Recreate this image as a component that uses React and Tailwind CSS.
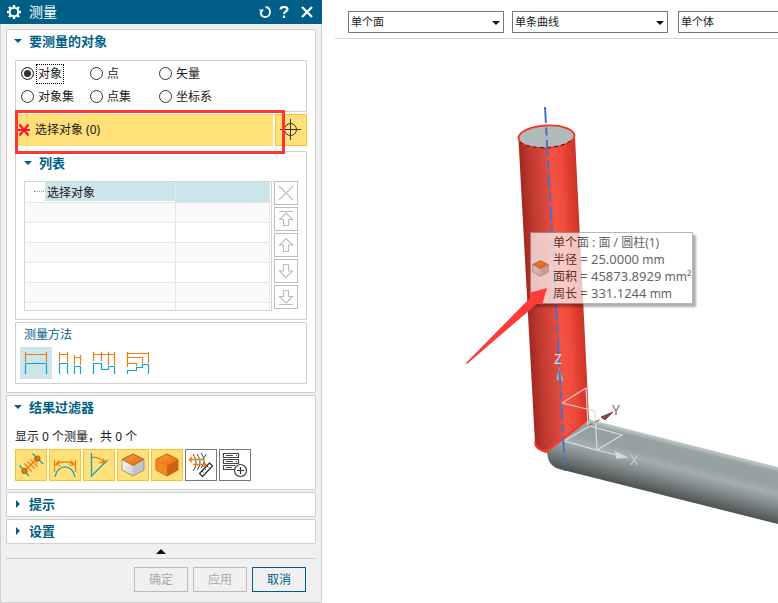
import React from "react";

const FONT = "font-['Noto_Sans','Noto_Sans_CJK_SC',sans-serif]";

function Caret({ open, className = "" }) {
  return (
    <svg className={`size-2 shrink-0 ${className}`} viewBox="0 0 8 8" fill="#005f87" aria-hidden="true">
      {open ? <path d="M0 2h8L4 6z" /> : <path d="M2 0v8l4-4z" />}
    </svg>
  );
}

function Heading({ open = true, children }) {
  return (
    <h2 className="text-[13px] leading-[22px] font-bold text-[#005f87]">
      <button type="button" aria-expanded={open} className="flex w-full items-center gap-[7px] pl-[7px] text-left">
        <Caret open={open} />
        {children}
      </button>
    </h2>
  );
}

function Section({ className = "", children }) {
  return <section className={`rounded-[1px] border border-[#cfcfcf] bg-white ${className}`}>{children}</section>;
}

function RadioOption({ label, checked }) {
  return (
    <label className="flex h-[23px] items-center gap-[2px] text-[12px] leading-4 text-[#1a1a1a]">
      <input
        type="radio"
        name="object-kind"
        defaultChecked={checked}
        className="m-0 size-[13px] appearance-none rounded-full border border-[#333] bg-white checked:bg-[#333] checked:shadow-[inset_0_0_0_2px_white]"
      />
      <span className={checked ? "border border-dotted border-black px-px py-px" : "px-[2px]"}>{label}</span>
    </label>
  );
}

const KINDS = ["对象", "点", "矢量", "对象集", "点集", "坐标系"];

const LIST_ACTIONS = [
  { label: "删除", d: "M5 5l14 14M19 5L5 19" },
  { label: "移至顶部", d: "M5 4.5h14M12 6l6.5 6.5h-4v6h-5v-6h-4z" },
  { label: "上移", d: "M12 5.500l6.500 6.500h-4v6.500h-5v-6.500h-4z" },
  { label: "下移", d: "M12 18.500l6.500-6.500h-4v-6.500h-5v6.500h-4z" },
  { label: "移至底部", d: "M5 19.500h14M12 18l6.500-6.500h-4v-6h-5v6h-4z" },
];

const METHODS = [
  { label: "对象间", top: "M5.500 5v10M26.500 5v10M5.500 7.500h21", bottom: "M5.500 27V16.500h21V27" },
  {
    label: "对象对",
    top: "M5.500 5v10M13.500 5v10M5.500 7.500h8M20.500 8v10M26.500 8v10M20.500 10.500h6",
    bottom: "M5.500 27V16.500h8V27M20.500 27v-7.500h6V27",
  },
  {
    label: "对象链",
    top: "M5.500 5v9M13.500 5v9M20.500 5v13M26.500 5v13M5.500 7.500h21",
    bottom: "M5.500 27V16.500h8v6h7v-3h6V27",
  },
  {
    label: "从参考对象",
    top: "M5.500 5v15M5.500 6.500h21M26.500 5v11M5.500 10.500h15v6M5.500 16.500h9v3",
    bottom: "M5.500 27v-3.500h9v-3h6v-3h6V27",
  },
];

function Method({ item, active }) {
  return (
    <button type="button" aria-label={item.label} aria-pressed={active} className={active ? "size-8 bg-[#cce5ea]" : "size-8"}>
      <svg viewBox="0 0 32 32" className="size-8" fill="none" strokeWidth="1.200">
        <path d={item.top} stroke="#ee7d0b" />
        <path d={item.bottom} stroke="#0aa6cf" />
      </svg>
    </button>
  );
}

function Cube({ solid }) {
  return (
    <>
      <defs>
        <linearGradient id="cubeTop" x1="0" y1="0" x2="1" y2="1">
          <stop offset="0" stopColor="#f9a03c" />
          <stop offset="1" stopColor="#e5690a" />
        </linearGradient>
        <linearGradient id="cubeLight" x1="0" y1="0" x2="1" y2="1">
          <stop offset="0" stopColor="#ffffff" />
          <stop offset="1" stopColor="#c9c9cd" />
        </linearGradient>
      </defs>
      <path d="M5 10.500l11 6V27L5 21z" fill={solid ? "#f28a24" : "url(#cubeLight)"} />
      <path d="M27 10.500l-11 6V27l11-6z" fill={solid ? "#d0600e" : "#c3c3c8"} />
      <path d="M16 5l11 5.500-11 6-11-6z" fill="url(#cubeTop)" />
      <path d="M16 5l11 5.500V21l-11 6-11-6V10.500z" fill="none" stroke={solid ? "#c4570a" : "#88888c"} strokeWidth=".8" />
      <path d="M5 10.500l11 6 11-6L16 5z" fill="none" stroke={solid ? "#dd6c10" : "#c4570a"} strokeWidth=".8" />
    </>
  );
}

const FILTERS = [
  {
    label: "距离",
    on: true,
    art: (
      <>
        <path d="M4.500 16.500L14 27M17.500 4.500L28 15" stroke="#0aa6cf" strokeWidth="1.400" />
        <path d="M9 22L23 9M9.500 14.500l7 8M12.500 12.500l7 7M15.500 10.500l7 7M18.500 9.500l4 5" stroke="#ee7d0b" strokeWidth="1.200" />
        <circle cx="9.500" cy="22" r="2.600" fill="#e8750c" stroke="#b85708" />
        <circle cx="22.500" cy="9.500" r="2.600" fill="#e8750c" stroke="#b85708" />
      </>
    ),
  },
  {
    label: "曲线长度",
    on: true,
    art: (
      <>
        <path d="M6 28c2-13.500 18-13.500 20 0" stroke="#0aa6cf" strokeWidth="1.300" />
        <path d="M5.500 11v12M26.500 11v12M6.500 15.500c5-3.500 14-3.500 19 0M10.500 11.500l-4 4 5 1M21.500 11.500l4 4-5 1" stroke="#ee7d0b" strokeWidth="1.200" />
      </>
    ),
  },
  {
    label: "角度",
    on: true,
    art: (
      <>
        <path d="M8.500 4v23L24.500 11" stroke="#0aa6cf" strokeWidth="1.300" />
        <path d="M9 8.500c5-.5 9 1 12.500 5M20.500 9.500l1 4.200-5-.2" stroke="#ee7d0b" strokeWidth="1.300" />
      </>
    ),
  },
  { label: "面", on: true, art: <Cube /> },
  { label: "体", on: true, art: <Cube solid /> },
  {
    label: "曲率",
    on: false,
    art: (
      <>
        <path d="M8 5c4 6 4 12 0 17M12 5c4 6 4 11 0 16M16 4c4 6 4 10 0 15M21 5c-1 3-2 4-4 6" stroke="#444" />
        <path d="M4.500 10.500H18M8 15.500h13M7 8l-2.500 2.500L7 13M18.500 13l2.500 2.500-2.500 2.500" stroke="#ee7d0b" strokeWidth="1.400" />
        <path d="M24.500 14l3 3L17.500 27.500l-3-3z" fill="#fff" stroke="#333" strokeWidth="1.300" />
        <path d="M17 22l1.500 1.500M19.500 19.500L21 21M22 17l1.500 1.500" stroke="#333" />
      </>
    ),
  },
  {
    label: "添加列表",
    on: false,
    art: (
      <>
        <path d="M4.500 4.500h15v4h-15zM4.500 10.500h15v4h-15zM16 20.500H4.500v-4H16" stroke="#444" strokeWidth="1.200" />
        <path d="M7 6.500h7M7 12.500h7M7 18.500h6M17 6.500h1M17 12.500h1" stroke="#444" />
        <circle cx="21.500" cy="21.500" r="6" fill="#fff" stroke="#444" strokeWidth="1.200" />
        <path d="M18 21.500h7M21.500 18v7" stroke="#333" strokeWidth="1.200" />
      </>
    ),
  },
];

function MeasureDialog() {
  return (
    <aside className="flex w-[322px] shrink-0 flex-col border-x border-b border-[#d0d0d0] bg-[#f0f0f0]">
      <header className="-mx-px flex h-6 items-center bg-[#005f87] pr-[9px] pl-[7px] text-white">
        <svg viewBox="0 0 14 14" className="size-[14px]" fill="none" stroke="white" aria-hidden="true">
          <circle cx="7" cy="7" r="4.300" strokeWidth="2" />
          <path d="M7 0v2.500M7 11.500V14M0 7h2.500M11.500 7H14M2 2l2 2M10 10l2 2M12 2l-2 2M4 10l-2 2" strokeWidth="2.400" />
        </svg>
        <h1 className="ml-2 flex-1 text-[14px] leading-6">测量</h1>
        <div className="flex items-center gap-2">
          <button type="button" aria-label="重置">
            <svg viewBox="0 0 12 12" className="size-3" fill="none" stroke="white" strokeWidth="1.800">
              <path d="M6.500 1C12.500 1.500 12.500 11 6.300 11 3.500 11 1.800 9 1.600 6" />
              <path d="M0 3.500h5L2.500 7z" fill="white" stroke="none" />
            </svg>
          </button>
          <button type="button" aria-label="帮助">
            <svg viewBox="0 0 10 12" className="h-3 w-[10px]" fill="none" stroke="white" strokeWidth="2.200">
              <path d="M1.500 3.500C1.500 0 8.500 0 8.500 3.300 8.500 5.500 5 5.300 5 8M5 9.500V12" />
            </svg>
          </button>
          <button type="button" aria-label="关闭" className="ml-1">
            <svg viewBox="0 0 12 12" className="size-3" fill="none" stroke="white" strokeWidth="2.200">
              <path d="M1 1l10 10M11 1L1 11" />
            </svg>
          </button>
        </div>
      </header>

      <div className="flex flex-col gap-[2px] px-[5px] pt-[5px]">
        <Section className="px-2 pb-2">
          <div className="-ml-2">
            <Heading>要测量的对象</Heading>
          </div>
          <div
            role="radiogroup"
            aria-label="要测量的对象"
            className="mt-2 grid grid-cols-[69px_69px_1fr] rounded-[1px] border border-[#cfcfcf] px-[5px] pt-px pb-[3px]"
          >
            {KINDS.map((k, i) => (
              <RadioOption key={k} label={k} checked={i === 0} />
            ))}
          </div>

          <div className="relative mt-[2px] flex gap-[2px]">
            <button type="button" className="flex h-8 flex-1 items-center gap-1 bg-[#ffe079] pl-[2px] text-left text-[12px] text-[#1a1a1a]">
              <svg viewBox="0 0 14 14" className="size-[14px]" stroke="#fa1432" strokeWidth="2.200" aria-hidden="true">
                <path d="M1 7h12M2.500 1.500l9 11M11.500 1.500l-9 11" />
              </svg>
              选择对象 (0)
            </button>
            <button type="button" aria-label="指定点" className="size-8 border border-[#fdbf2d] bg-[#ffe079]">
              <svg viewBox="0 0 30 30" className="size-[30px]" fill="none" stroke="#333">
                <circle cx="14.500" cy="14.500" r="6" />
                <path d="M4 14.500h21M14.500 4v21" />
              </svg>
            </button>
            <div className="pointer-events-none absolute -top-1 right-[22px] -bottom-2 left-0 border-[3px] border-[#ff3535]" />
          </div>

          <div className="mt-[5px] rounded-[1px] border border-[#cfcfcf] px-2 pb-2">
            <div className="-ml-2 pl-px">
              <Heading>列表</Heading>
            </div>
            <div className="mt-[7px] flex gap-[2px]">
              <div className="h-[130px] flex-1 overflow-hidden border border-[#d5d5d5] px-px">
                <table className="w-full table-fixed border-collapse text-[12px] leading-4 text-[#1a1a1a]">
                  <tbody>
                    {[0, 1, 2, 3, 4, 5, 6].map((row) => (
                      <tr key={row} className="h-5 border-b border-[#e6e6e6] even:bg-[#fafafa]">
                        <td className="w-[149px] border-r border-[#e6e6e6] p-0">
                          {row === 0 && (
                            <div className="flex h-[19px] items-center">
                              <span className="mr-px ml-2 w-[10px] border-t border-dotted border-[#999]" />
                              <span className="h-[19px] flex-1 bg-[#cce5ea] pt-px pl-[2px] leading-[19px]">选择对象</span>
                            </div>
                          )}
                        </td>
                        <td className={row === 0 ? "border-r border-[#e6e6e6] bg-[#cce5ea] p-0" : "border-r border-[#e6e6e6] p-0"} />
                      </tr>
                    ))}
                  </tbody>
                </table>
              </div>
              <div className="flex flex-col gap-[2px]">
                {LIST_ACTIONS.map((a) => (
                  <button key={a.label} type="button" aria-label={a.label} className="size-6 border border-[#bcbcbc]">
                    <svg viewBox="1 1 22 22" className="size-[22px]" fill="none" stroke="#bcbcbc" strokeWidth="1.100">
                      <path d={a.d} />
                    </svg>
                  </button>
                ))}
              </div>
            </div>
          </div>

          <div className="mt-[2px] rounded-[1px] border border-[#cfcfcf] px-1 pb-1">
            <h3 className="pl-1 text-[12px] leading-6 text-[#005f87]">测量方法</h3>
            <div className="flex gap-[2px]">
              {METHODS.map((m, i) => (
                <Method key={m.label} item={m} active={i === 0} />
              ))}
            </div>
          </div>
        </Section>

        <Section className="pb-2">
          <Heading>结果过滤器</Heading>
          <p className="mt-[11px] px-2 text-[12px] leading-4 text-[#1a1a1a]">显示 0 个测量，共 0 个</p>
          <div className="mt-1 flex gap-[2px] px-2">
            {FILTERS.map((f) => (
              <button
                key={f.label}
                type="button"
                aria-label={f.label}
                aria-pressed={f.on}
                className={f.on ? "size-8 border border-[#fdbf2d] bg-[#ffe079]" : "size-8 border border-[#777] bg-white"}
              >
                <svg viewBox="1 1 30 30" className="size-[30px]" fill="none">
                  {f.art}
                </svg>
              </button>
            ))}
          </div>
        </Section>

        <Section className="pb-px">
          <Heading open={false}>提示</Heading>
        </Section>
        <Section className="pb-px">
          <Heading open={false}>设置</Heading>
        </Section>
      </div>

      <div className="mx-[5px] flex h-[15px] items-center justify-center border-b border-[#cfcfcf]">
        <button type="button" aria-label="收起">
          <svg viewBox="0 0 10 5" className="h-[5px] w-[10px]" fill="#111">
            <path d="M0 5l5-5 5 5z" />
          </svg>
        </button>
      </div>
      <footer className="flex justify-end gap-[5px] px-[15px] pt-2 pb-2 text-[12px]">
        <button type="button" disabled className="h-[25px] w-[54px] border border-[#bcbcbc] text-[#aaa]">确定</button>
        <button type="button" disabled className="h-[25px] w-[54px] border border-[#bcbcbc] text-[#aaa]">应用</button>
        <button type="button" className="h-[25px] w-[54px] border border-[#005f87] text-[#005f87]">取消</button>
      </footer>
    </aside>
  );
}

function RuleSelect({ label, value, className = "" }) {
  return (
    <div className={`relative w-[156px] shrink-0 ${className}`}>
      <select aria-label={label} className="block h-[22px] w-full appearance-none border border-[#777] bg-white pl-[2px] text-[11px] leading-4 text-[#1a1a1a]">
        <option>{value}</option>
      </select>
      <svg viewBox="0 0 8 4" className="pointer-events-none absolute top-[10px] right-1 h-1 w-2" fill="#111" aria-hidden="true">
        <path d="M0 0h8L4 4z" />
      </svg>
    </div>
  );
}

function Model() {
  return (
    <svg viewBox="322 39 456 564" className="block h-[564px] w-[456px]" fill="none" role="img" aria-label="模型">
      <defs>
        <linearGradient id="redTube" gradientUnits="userSpaceOnUse" x1="519" y1="143" x2="576" y2="140">
          <stop offset="0" stopColor="#a3281f" />
          <stop offset=".2" stopColor="#c23b31" />
          <stop offset=".42" stopColor="#d9463a" />
          <stop offset=".56" stopColor="#f45243" />
          <stop offset=".72" stopColor="#f04c3e" />
          <stop offset=".85" stopColor="#e03c2e" />
          <stop offset="1" stopColor="#c5342a" />
        </linearGradient>
        <linearGradient id="greyTube" gradientUnits="userSpaceOnUse" x1="683" y1="443" x2="669" y2="498">
          <stop offset="0" stopColor="#c3cccc" />
          <stop offset=".1" stopColor="#96a1a1" />
          <stop offset=".32" stopColor="#95a0a1" />
          <stop offset=".46" stopColor="#a3aeaf" />
          <stop offset=".62" stopColor="#8b9495" />
          <stop offset=".85" stopColor="#646a6a" />
          <stop offset="1" stopColor="#484d4d" />
        </linearGradient>
      </defs>

      <path d="M588 419L778 467V524L559 469C551 467 547 460 547 451z" fill="url(#greyTube)" />
      <path d="M518.500 140L535 443Q536 450 546 451L589 419L575 137z" fill="url(#redTube)" />
      <path d="M535 442Q535 449 546 452L589 419" stroke="#fb3528" strokeWidth="2" />
      <ellipse cx="546.500" cy="136.800" rx="28" ry="11.300" transform="rotate(-3 546.500 136.800)" fill="#b1b9bb" stroke="#f53428" strokeWidth="1.800" />
      <path d="M520 142c8 8 42 8 53-3" stroke="#321615" strokeDasharray="4 3" />

      <g stroke="#e5c9c9" strokeWidth="1.200">
        <path d="M562 403l24-15 2 38M562 403l33 8" />
        <path d="M595 411l2 39" stroke="#ddd" />
        <path d="M564 441l26-15 32 9-25 15zM597 450l20 5" stroke="#d9dede" />
        <path d="M588 426l15-8" stroke="#a06468" strokeDasharray="5 3" />
      </g>
      <path d="M556 380l3-12 5 13z" fill="#aaa5a5" />
      <path d="M615 451l14 7-13 .5z" fill="#d8d8d8" />
      <path d="M601 417l12-5-8 8z" fill="#85484a" stroke="#85484a" />
      <path d="M545 107L565 471" stroke="#4a70bf" strokeWidth="2" strokeDasharray="16 4.500 8 4.500" />
      <g fontSize="14" className="font-['Noto_Sans',sans-serif]">
        <text x="554" y="364" fill="#ddd">Z</text>
        <text x="630" y="465" fill="#c9cdcd">X</text>
        <text x="612" y="415" fill="#8d6668">Y</text>
      </g>
    </svg>
  );
}

const RESULTS = [
  { name: "半径", value: "= 25.0000", unit: "mm" },
  { name: "面积", value: "= 45873.8929", unit: "mm²" },
  { name: "周长", value: "= 331.1244", unit: "mm" },
];

function Tooltip() {
  return (
    <div className="absolute top-[193px] left-[208px] flex w-[163px] items-center gap-1 border border-[#999] bg-white py-px pl-px text-[12px] leading-[17px] whitespace-nowrap text-[#222] opacity-70 shadow-[3px_3px_2px_rgba(0,0,0,0.45)]">
      <svg viewBox="4 4 24 24" className="size-[17px] shrink-0" fill="none" aria-hidden="true">
        <Cube />
      </svg>
      <div>
        <p className="h-[17px]">单个面 : 面 / 圆柱(1)</p>
        {RESULTS.map((r) => (
          <p key={r.name} className="h-[17px]">
            {r.name} <span className="text-[13px]">{r.value}</span> {r.unit}
          </p>
        ))}
      </div>
    </div>
  );
}

export default function App() {
  return (
    <div className={`flex min-h-screen overflow-hidden bg-white ${FONT}`}>
      <MeasureDialog />
      <main className="flex min-w-0 flex-1 flex-col overflow-hidden">
        <div className="ml-[13px] flex h-[39px] shrink-0 border-b border-[#d8d8d8] pt-[11px] pl-[13px]">
          <RuleSelect label="面规则" value="单个面" />
          <RuleSelect label="曲线规则" value="单条曲线" className="ml-2" />
          <RuleSelect label="体规则" value="单个体" className="ml-[10px]" />
        </div>
        <div className="relative flex-1 overflow-hidden">
          <Model />
          <Tooltip />
          <svg viewBox="0 0 90 80" className="absolute top-[245px] left-[140px] h-20 w-[90px]" fill="#ff3a3a" aria-hidden="true">
            <path d="M4 79L69 13 67 9 85 4 80 21 76 19 5 80z" />
          </svg>
        </div>
      </main>
    </div>
  );
}
